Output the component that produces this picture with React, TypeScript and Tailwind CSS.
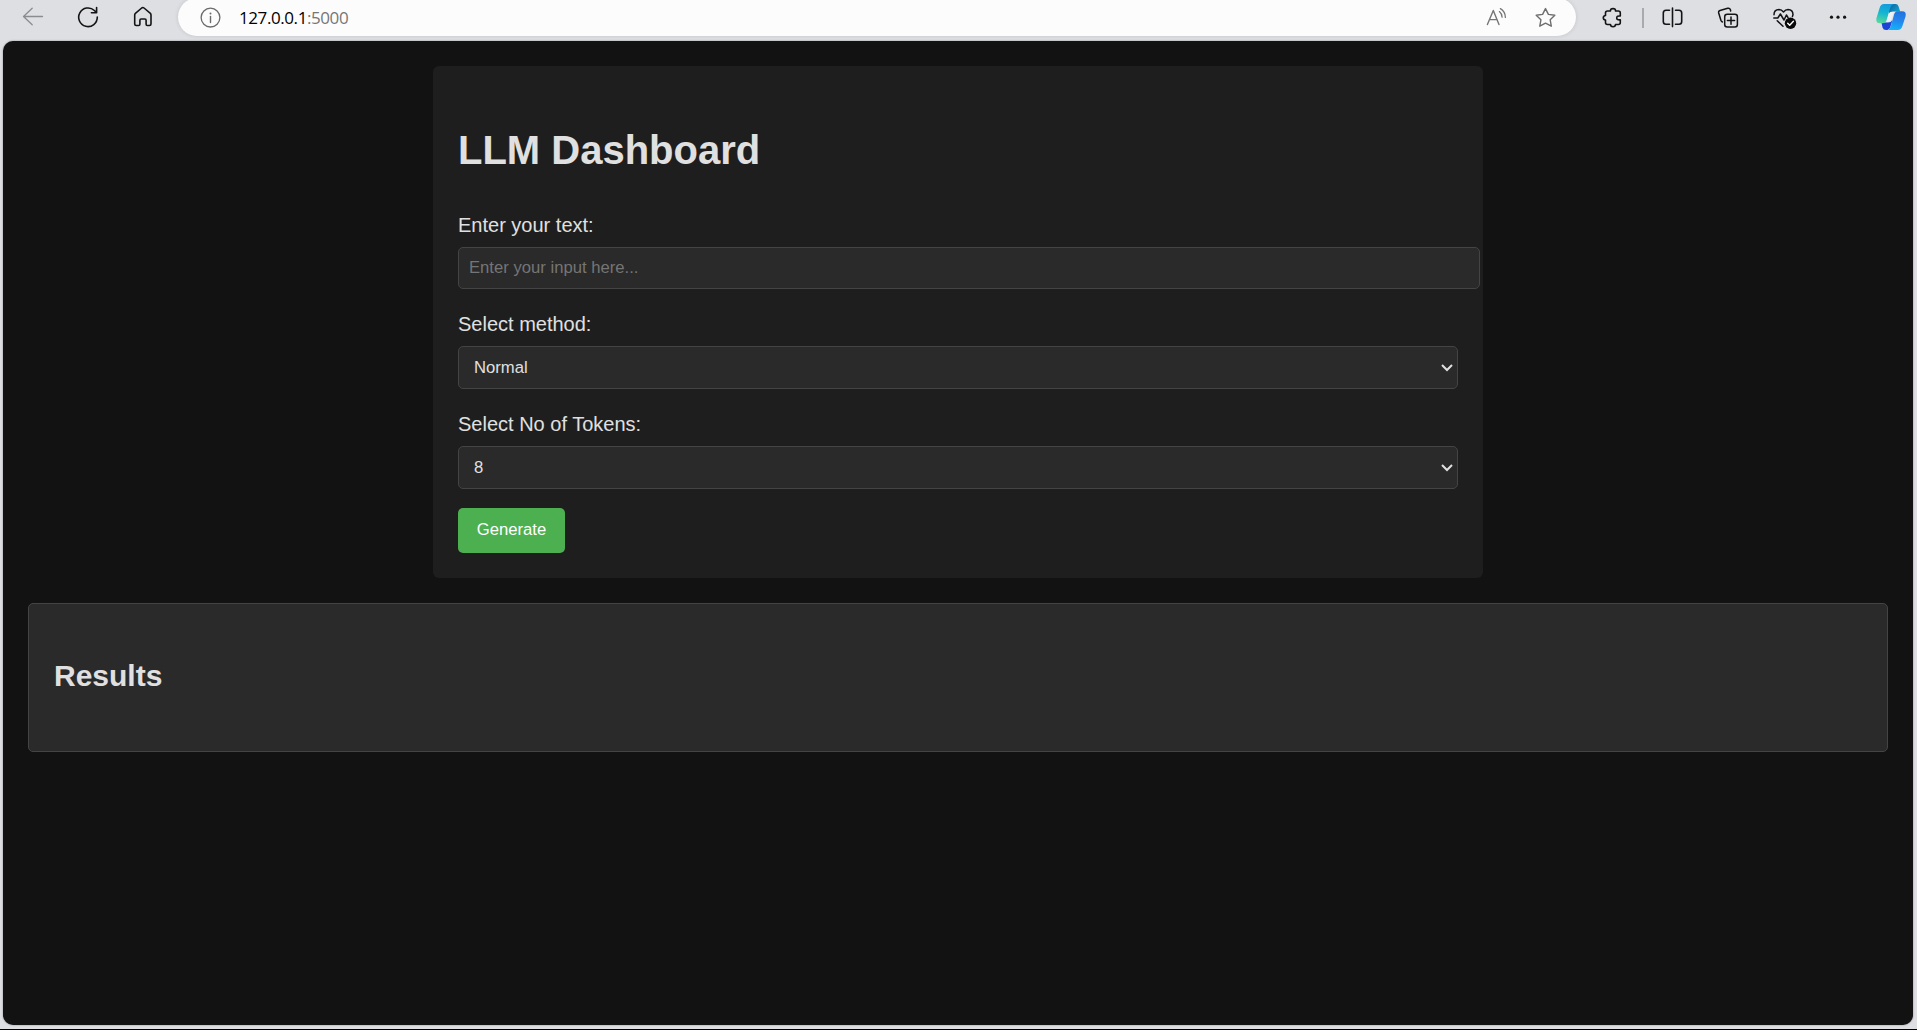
import type { ReactNode } from "react";

type IconProps = {
  width: number;
  className: string;
  children: ReactNode;
};

function Icon({ width, className, children }: IconProps) {
  return (
    <svg
      width={width}
      height={34}
      viewBox={`0 0 ${width} 34`}
      fill="none"
      stroke="currentColor"
      strokeWidth={1.5}
      strokeLinecap="round"
      strokeLinejoin="round"
      className={`shrink-0 ${className}`}
    >
      {children}
    </svg>
  );
}

function AddressBar() {
  return (
    <div className="-mt-0.5 ml-[23px] flex h-[38px] w-[1398px] shrink-0 items-start rounded-full bg-[#fcfcfd] pt-0.5 shadow-[0_0_4px_rgba(0,0,0,0.12)]">
      <Icon width={24} className="ml-[21px] text-[#6b6b6b]">
        <circle cx="11.5" cy="17.6" r="9.4" strokeWidth="1.3" />
        <path d="M11.5 16.5v6" strokeWidth="1.4" />
        <circle cx="11.5" cy="13.4" r="1" fill="currentColor" stroke="none" />
      </Icon>
      <div className="ml-4 h-[34px] flex-1 whitespace-nowrap font-['Open_Sans',sans-serif] text-[17px] leading-[35px] tracking-[-0.42px] text-black">
        127.0.0.1<span className="text-[#767676]">:5000</span>
      </div>
      <Icon width={24} className="text-[#767676]">
        <path d="M2.4 24.6 8.3 10.4 14 24.6M4.5 19.6h7.7" strokeWidth="1.4" />
        <path d="M14.4 11.6q2.6 2.2 2.7 5.6M15.4 8.6q4.9 3 5 8.8" strokeWidth="1.3" />
      </Icon>
      <Icon width={24} className="mr-[18px] ml-[25px] text-[#6e6e6e]">
        <path
          d="M11.5 8.6l2.9 5.8 6.4.9-4.6 4.5 1.1 6.4-5.8-3-5.7 3 1.1-6.4-4.7-4.5 6.4-.9z"
          strokeWidth="1.4"
        />
      </Icon>
    </div>
  );
}

function Copilot() {
  return (
    <svg width={32} height={34} viewBox="0 0 32 34" className="ml-[27px] shrink-0">
      <defs>
        <linearGradient id="cpLeft" x1="0.5" y1="0" x2="0.3" y2="1">
          <stop offset="0" stopColor="#159bdc" />
          <stop offset="0.45" stopColor="#12b5d3" />
          <stop offset="1" stopColor="#5bd99a" />
        </linearGradient>
        <linearGradient id="cpRight" x1="0.6" y1="0" x2="0.4" y2="1">
          <stop offset="0" stopColor="#2372dd" />
          <stop offset="0.5" stopColor="#2387ee" />
          <stop offset="1" stopColor="#12b4f7" />
        </linearGradient>
        <linearGradient id="cpTop" x1="0" y1="0" x2="1" y2="0.7">
          <stop offset="0" stopColor="#0b5fa0" />
          <stop offset="1" stopColor="#14a3cc" />
        </linearGradient>
      </defs>
      <path d="M14 4h6.6q2.200 0 2.900 2.200l1.700 5.200H18q-2.600 0-4 2z" fill="url(#cpTop)" />
      <path d="M6.500 22.600h6.500q3 0 4.500-2.600l-2.500 8-2.500 2.100h-1.500q-2.700 0-3.500-2.600z" fill="#1b45d8" />
      <path
        d="M9 4h9.500q-2.500.8-3.500 4.200l-3.300 11.500q-1 3.600-4 3.600H4.800q-4.400 0-3.400-5L4.600 8q1.100-4 4.400-4z"
        fill="url(#cpLeft)"
      />
      <path
        d="M22 11.200h5.200q4.400 0 3.400 5l-3.200 9.700q-1.200 4.100-4.800 4.100h-10q2.400-.8 3.400-4.200l3-11q1-3.600 3-3.600z"
        fill="url(#cpRight)"
      />
      <path d="M15.500 12h4q-1 .8-1.500 2.500l-1.300 4.500q-.8 2.700-3.700 2.700h-2q.8-.7 1.100-2l1.500-5.200q.6-2 1.900-2.500z" fill="#eef2f5" />
    </svg>
  );
}

function BrowserToolbar() {
  return (
    <header className="flex h-[41px] shrink-0 items-start text-[#141414]">
      <Icon width={24} className="ml-[21px] text-[#8b8c8f]">
        <path d="M21.5 16.500H2.700M11.200 8.300 2.500 16.500l8.700 8.200" strokeWidth="1.3" />
      </Icon>
      <Icon width={24} className="ml-[31px]">
        <path d="M21.300 17.100A9.300 9.300 0 1 1 18.400 10.500L20.600 12.700M20.600 7.600v5.100h-5.200" strokeWidth="1.6" />
      </Icon>
      <Icon width={24} className="ml-[31px]">
        <path
          d="M3.7 14.9q0-.9.7-1.5L10.7 8q1.2-.9 2.3 0l6.4 5.4q.6.6.6 1.5v9q0 1.6-1.6 1.6h-2q-1.3 0-1.3-1.3v-4q0-1.2-1.2-1.2h-3.8q-1.2 0-1.2 1.2v4q0 1.3-1.3 1.3h-2.3q-1.6 0-1.6-1.6z"
          strokeWidth="1.6"
        />
      </Icon>
      <AddressBar />
      <Icon width={24} className="ml-[24px]">
        <path
          d="M7.500 11h3q-.2-2.400 2.500-2.400T15.500 11h2.800q2 0 2 2v3q-3.600-.4-3.600 1.900t3.600 1.900v2.700q0 2-2 2h-2.800q0 2.200-2.500 2.200t-2.500-2.200h-3q-2 0-2-2v-2.400q-2.200-.2-2.200-2.300t2.200-2.300V13q0-2 2-2z"
          strokeWidth="1.6"
        />
      </Icon>
      <div className="mt-2 ml-[18px] h-5 w-0.5 shrink-0 bg-[#a9aaad]" />
      <Icon width={24} className="ml-[17px]">
        <path
          d="M8.500 10.300H5q-2.700 0-2.700 2.700v8.600q0 2.700 2.700 2.700h3.500M14.500 10.300H18q2.700 0 2.700 2.700v8.600q0 2.700-2.700 2.700h-3.500M11.500 8v18.600"
          strokeWidth="1.6"
        />
      </Icon>
      <Icon width={24} className="ml-[31px]">
        <rect x="8.700" y="14.300" width="12.700" height="12.700" rx="2.500" />
        <path d="M15 17v7.200M11.400 20.600h7.200" />
        <path d="M6.400 22q-1.100-.5-1.500-1.700L2.700 13q-.5-1.900 1.300-2.500l7.700-2.200q2-.5 2.600 1.200l.4 1.500" />
      </Icon>
      <Icon width={26} className="ml-[32px]">
        <path d="M2 14.800q0-5 5-5.200 2.600 0 4.500 2.400Q13.500 9.600 16 9.600q5 .2 5 5.200l-.6 1.700" />
        <path d="M1.800 18h4l2.600-4 3.600 6 2.400-5 1.600 2.500M5.200 20.700l5.800 5.500" />
        <circle cx="18.500" cy="23.200" r="5.700" fill="#090909" stroke="none" />
        <path d="M15.700 23.300l2 2 3.700-4" stroke="#fff" strokeWidth="1.400" />
      </Icon>
      <Icon width={20} className="ml-[30px]">
        <circle cx="3.500" cy="17.200" r="1.600" fill="currentColor" stroke="none" />
        <circle cx="10" cy="17.200" r="1.600" fill="currentColor" stroke="none" />
        <circle cx="16.600" cy="17.200" r="1.600" fill="currentColor" stroke="none" />
      </Icon>
      <Copilot />
    </header>
  );
}

function SelectField({ label, value, options }: { label: string; value: string; options: string[] }) {
  return (
    <label className="mb-[19px] flex flex-col">
      <span className="mt-0.5 mb-2 h-7 text-xl leading-7">{label}</span>
      <span className="relative block">
        <select
          defaultValue={value}
          className="block h-[43px] w-full appearance-none rounded-[5px] border border-[#444] bg-[#2a2a2a] px-[15px] text-[16.667px] text-[#e0e0e0]"
        >
          {options.map((option) => (
            <option key={option}>{option}</option>
          ))}
        </select>
        <svg
          width="12"
          height="8"
          viewBox="0 0 12 8"
          fill="none"
          stroke="#e0e0e0"
          strokeWidth="2"
          className="pointer-events-none absolute top-[18px] right-[5px]"
        >
          <path d="M1 1l5 5 5-5" />
        </svg>
      </span>
    </label>
  );
}

export default function App() {
  return (
    <div className="flex h-[1030px] w-[1917px] flex-col overflow-hidden border-b border-black bg-[#dedfe3] font-['Liberation_Sans',Arial,sans-serif] text-[#e0e0e0]">
      <BrowserToolbar />
      <div className="mr-1 ml-[3px] h-[984px] rounded-[10px] bg-[#121212] px-[25px] pt-[25px] shadow-[0_0_2px_rgba(0,0,0,0.4)]">
        <main className="mx-auto h-[512px] w-[1050px] rounded-[6px] bg-[#1e1e1e] p-[25px]">
          <h1 className="mt-[35px] text-[40px] leading-[48px] font-bold">LLM Dashboard</h1>
          <form onSubmit={(event) => event.preventDefault()}>
            <label className="mt-[37px] mb-[19px] flex flex-col">
              <span className="mb-2 h-[28px] text-xl leading-7">Enter your text:</span>
              <input
                type="text"
                placeholder="Enter your input here..."
                className="h-[42px] w-[1022px] rounded-[5px] border border-[#444] bg-[#2a2a2a] px-2.5 pb-px text-[16.667px] placeholder:text-[#757575]"
              />
            </label>
            <SelectField label="Select method:" value="Normal" options={["Normal"]} />
            <SelectField label="Select No of Tokens:" value="8" options={["8"]} />
            <button
              type="submit"
              className="flex h-[45px] w-[107px] items-center justify-center rounded-[5px] bg-[#4caf50] pb-[3px] text-[16.667px] text-white"
            >
              Generate
            </button>
          </form>
        </main>
        <section className="mt-[25px] h-[149px] w-[1860px] rounded-[5px] border border-[#444] bg-[#2a2a2a] px-[25px] pt-[54px]">
          <h2 className="text-[30px] leading-9 font-bold">Results</h2>
        </section>
      </div>
    </div>
  );
}
